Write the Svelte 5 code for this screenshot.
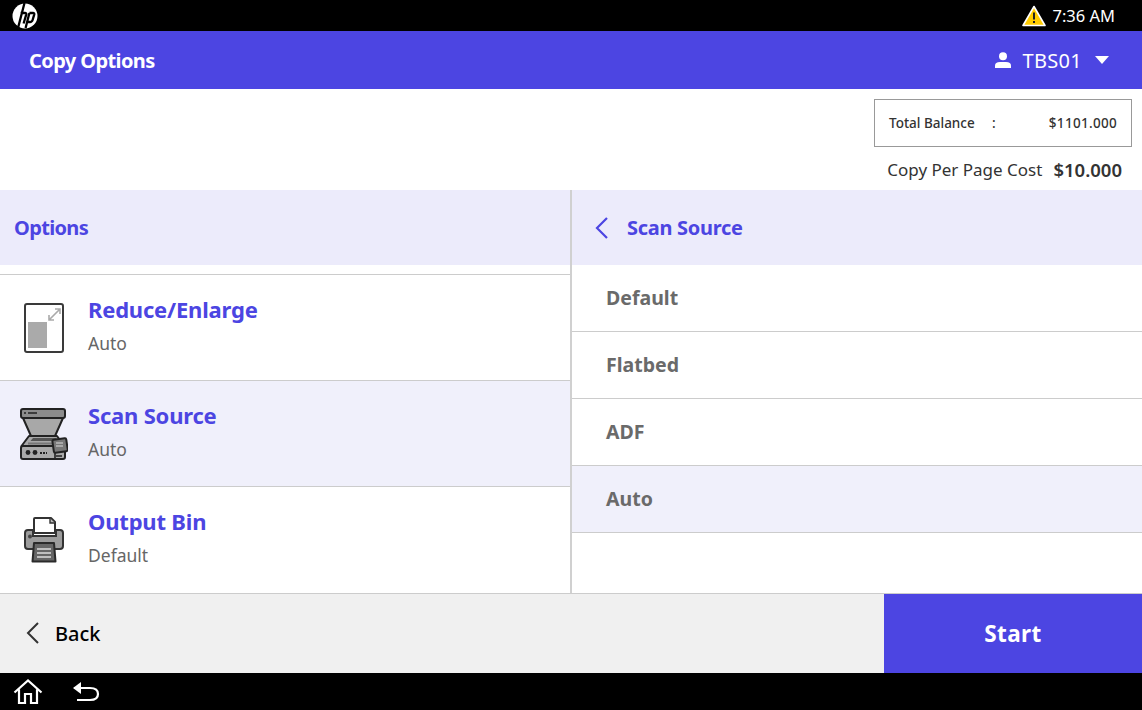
<script>
  const options = [
    { name: 'Reduce/Enlarge', value: 'Auto', icon: 'reduce' },
    { name: 'Scan Source', value: 'Auto', icon: 'scan', selected: true },
    { name: 'Output Bin', value: 'Default', icon: 'bin' }
  ];
  const sources = [
    { name: 'Default' },
    { name: 'Flatbed' },
    { name: 'ADF' },
    { name: 'Auto', selected: true }
  ];
</script>

<div class="screen">
  <div class="status">
    <div class="logo">
      <svg width="26" height="26" viewBox="0 0 26 26">
        <circle cx="13" cy="13" r="12.5" fill="#fff" />
        <path d="M12.5 0 L6 25 M8.6 10 H13 Q14.6 10 14.2 11.6 L11.6 20.5 M17.4 10 H21 Q22.6 10 22.2 11.6 L20.6 17 Q20 19 18 19 H15.6 M17.4 10 L13.6 25" fill="none" stroke="#000" stroke-width="2.3" />
      </svg>
    </div>
    <div class="clock">
      <svg width="24" height="22" viewBox="0 0 24 22">
        <path d="M12 1.5 L23 20.5 H1 Z" fill="#ffcc00" stroke="#fff" stroke-width="1.6" stroke-linejoin="round" />
        <path d="M12 7.5 V14.5 M12 16 V18" stroke="#222" stroke-width="2" />
      </svg>
      <span>7:36 AM</span>
    </div>
  </div>

  <header class="title">
    <h1>Copy Options</h1>
    <div class="user">
      <svg width="18" height="16" viewBox="0 0 18 16">
        <circle cx="9" cy="4.2" r="4" fill="#fff" />
        <path d="M1 16 V13.5 Q1 10 6 10 H12 Q17 10 17 13.5 V16 Z" fill="#fff" />
      </svg>
      <span>TBS01</span>
      <svg class="caret" width="16" height="8" viewBox="0 0 16 8"><path d="M1 0 H15 L8 8 Z" fill="#fff" /></svg>
    </div>
  </header>

  <section class="balance">
    <div class="balance-box">
      <span class="label">Total Balance</span>
      <span class="colon">:</span>
      <span class="amount">$1101.000</span>
    </div>
    <div class="cost">
      <span>Copy Per Page Cost</span>
      <strong>$10.000</strong>
    </div>
  </section>

  <main class="panes">
    <div class="pane left">
      <div class="pane-head">Options</div>
      <ul class="options">
        {#each options as opt}
          <li class="option" class:selected={opt.selected}>
            <div class="option-icon">
              {#if opt.icon === 'reduce'}
                <svg width="40" height="50" viewBox="0 0 40 50">
                  <rect x="1" y="1" width="38" height="48" rx="2" fill="#fff" stroke="#3a3a3a" stroke-width="2" />
                  <rect x="4" y="19" width="19" height="26" fill="#aaa" />
                  <path d="M25 17 L36 6 M31 6 H36 V11 M25 12 V17 H30" fill="none" stroke="#aaa" stroke-width="1.6" />
                </svg>
              {:else if opt.icon === 'scan'}
                <svg width="48" height="52" viewBox="0 0 48 52">
                  <path d="M3 1 H43 Q45 1 45 3 V8 Q45 10 43 10 H3 Q1 10 1 8 V3 Q1 1 3 1 Z" fill="#8c8c8c" stroke="#222" stroke-width="2" />
                  <path d="M4 5 H6 M8 5 H17" stroke="#222" stroke-width="1.6" />
                  <path d="M3 10 L11 28 H35 L43 10 Z" fill="#a8a8a8" stroke="#222" stroke-width="2" stroke-linejoin="round" />
                  <path d="M9 28 L1.5 38 H44.5 L37 28 Z" fill="#a8a8a8" stroke="#222" stroke-width="2" stroke-linejoin="round" />
                  <path d="M10.5 33 L13 30 H36 L38 33 Z" fill="#555" />
                  <path d="M8 35.5 H38" stroke="#777" stroke-width="2" />
                  <rect x="1" y="38" width="44" height="13" rx="2" fill="#aaa" stroke="#222" stroke-width="2" />
                  <circle cx="8" cy="44.5" r="2.4" fill="#222" />
                  <circle cx="15" cy="44.5" r="2.4" fill="#222" />
                  <path d="M20 45 H27" stroke="#222" stroke-width="2" stroke-dasharray="2 1" />
                  <rect x="33" y="31" width="14" height="13" rx="1.5" transform="rotate(-8 40 37)" fill="#777" stroke="#222" stroke-width="2" />
                  <path d="M36 35 H43 M36 38 H43" stroke="#bbb" stroke-width="1.3" />
                  <path d="M36 48 H42 M35 45 V50" stroke="#222" stroke-width="1.6" />
                </svg>
              {:else}
                <svg width="40" height="46" viewBox="0 0 40 46">
                  <path d="M10 14 V2 Q10 1 11 1 H27 L31 5 V16 H10 Z" fill="#fff" stroke="#333" stroke-width="2" stroke-linejoin="round" />
                  <path d="M26 1.5 V6 H31" fill="#bbb" stroke="#333" stroke-width="1.4" />
                  <path d="M4 13 H9 V19 H32 V13 H36 Q39 13 39 16 V29 Q39 32 36 32 H4 Q1 32 1 29 V16 Q1 13 4 13 Z" fill="#9c9c9c" stroke="#333" stroke-width="2" />
                  <circle cx="6" cy="19.5" r="2" fill="#444" />
                  <path d="M10 26 H30 L31.5 44.5 H8.5 Z" fill="#666" stroke="#2a2a2a" stroke-width="2" stroke-linejoin="round" />
                  <path d="M13 32 H27 M13 36 H27 M13 40 H27" stroke="#ddd" stroke-width="1.5" />
                </svg>
              {/if}
            </div>
            <div class="option-text">
              <div class="option-name">{opt.name}</div>
              <div class="option-value">{opt.value}</div>
            </div>
          </li>
        {/each}
      </ul>
    </div>
    <div class="pane right">
      <div class="pane-head">
        <svg class="chev" width="14" height="22" viewBox="0 0 14 22"><path d="M12 1 L2 11 L12 21" fill="none" stroke="#4c45e2" stroke-width="2.2" /></svg>
        <span>Scan Source</span>
      </div>
      <ul class="sources">
        {#each sources as src}
          <li class="source" class:selected={src.selected}>{src.name}</li>
        {/each}
      </ul>
    </div>
  </main>

  <footer class="actions">
    <div class="back">
      <svg width="14" height="22" viewBox="0 0 14 22"><path d="M12 1 L2 11 L12 21" fill="none" stroke="#333" stroke-width="2" /></svg>
      <span>Back</span>
    </div>
    <div class="start">Start</div>
  </footer>

  <nav class="bottom">
    <svg width="30" height="26" viewBox="0 0 30 26">
      <path d="M1.5 13.5 L15 1.5 L28.5 13.5 M6 10.5 V24 H12 V15 H18 V24 H24 V10.5" fill="none" stroke="#fff" stroke-width="2.2" />
    </svg>
    <svg width="28" height="20" viewBox="0 0 28 20">
      <path d="M2 6 H18 Q26 6 26 12 Q26 18 18 18 H5" fill="none" stroke="#fff" stroke-width="2.2" />
      <path d="M9 0 V12 L1 6 Z" fill="#fff" />
    </svg>
  </nav>
</div>

<style>
  :global(body) {
    margin: 0;
    background: #fff;
  }
  .screen {
    width: 1142px;
    height: 710px;
    display: flex;
    flex-direction: column;
    overflow: hidden;
    font-family: "Noto Sans", "Open Sans", sans-serif;
    color: #333;
  }
  ul {
    list-style: none;
    margin: 0;
    padding: 0;
  }

  .status {
    height: 31px;
    background: #000;
    display: flex;
    justify-content: space-between;
    align-items: center;
    color: #fff;
    padding: 0 27px 0 12px;
  }
  .logo {
    display: flex;
  }
  .clock {
    display: flex;
    align-items: center;
    gap: 6px;
    font-size: 16.5px;
  }

  .title {
    height: 58px;
    background: #4c45e2;
    color: #fff;
    display: flex;
    justify-content: space-between;
    align-items: center;
    padding: 0 32px 0 29px;
  }
  h1 {
    margin: 0;
    font-size: 20px;
    font-weight: 700;
    letter-spacing: -0.6px;
  }
  .user {
    display: flex;
    align-items: center;
    font-size: 20px;
    letter-spacing: 0.3px;
  }
  .user span {
    margin: 0 12px 0 11px;
  }

  .balance {
    height: 101px;
    display: flex;
    flex-direction: column;
    align-items: flex-end;
    padding: 10px 10px 0 0;
    box-sizing: border-box;
  }
  .balance-box {
    width: 258px;
    height: 48px;
    box-sizing: border-box;
    border: 1px solid #999;
    display: flex;
    align-items: center;
    padding: 0 14px;
    font-size: 13.5px;
    font-weight: 500;
  }
  .label {
    width: 103px;
  }
  .amount {
    margin-left: auto;
    letter-spacing: 0.3px;
  }
  .cost {
    display: flex;
    align-items: center;
    gap: 11px;
    margin-top: 11px;
    padding-right: 10px;
    font-size: 17px;
    height: 23px;
  }
  .cost strong {
    font-size: 18.5px;
    font-weight: 600;
  }

  .panes {
    height: 403px;
    display: flex;
  }
  .pane {
    display: flex;
    flex-direction: column;
  }
  .left {
    width: 570px;
    border-right: 2px solid #d0d0d0;
  }
  .right {
    flex: 1;
  }
  .pane-head {
    height: 75px;
    flex: none;
    background: #ecebfb;
    display: flex;
    align-items: center;
    padding-left: 14px;
    color: #4c45e2;
    font-size: 20px;
    font-weight: 700;
    letter-spacing: -0.65px;
  }
  .right .pane-head {
    padding-left: 23px;
    letter-spacing: -0.3px;
  }
  .chev {
    margin-right: 18px;
  }

  .options {
    margin-top: 9px;
    border-top: 1px solid #ccc;
  }
  .option {
    height: 105px;
    border-bottom: 1px solid #ccc;
    display: flex;
    align-items: center;
  }
  .option:last-child {
    border-bottom: none;
  }
  .option.selected {
    background: #f0f0fb;
  }
  .option-icon {
    width: 88px;
    flex: none;
    display: flex;
    justify-content: center;
  }
  .option-text {
    padding-bottom: 7px;
  }
  .option-name {
    color: #4c45e2;
    font-size: 22px;
    font-weight: 700;
    letter-spacing: -0.2px;
    line-height: 30px;
  }
  .option-value {
    margin-top: 7px;
    color: #666;
    font-size: 17.5px;
    line-height: 24px;
  }

  .source {
    height: 64px;
    border-bottom: 1px solid #ccc;
    display: flex;
    align-items: center;
    padding: 0 0 2px 34px;
    color: #6a6a6a;
    font-size: 19.5px;
    font-weight: 700;
  }
  .source.selected {
    background: #f0f0fb;
  }

  .actions {
    height: 80px;
    background: #f0f0f0;
    border-top: 1px solid #ccc;
    box-sizing: border-box;
    display: flex;
    justify-content: space-between;
  }
  .back {
    display: flex;
    align-items: center;
    padding: 0 0 1px 26px;
    gap: 15px;
    color: #000;
    font-size: 20px;
    font-weight: 500;
  }
  .start {
    width: 258px;
    background: #4c45e2;
    color: #fff;
    font-size: 22.5px;
    font-weight: 700;
    display: flex;
    align-items: center;
    justify-content: center;
    letter-spacing: 0.4px;
    padding-bottom: 1px;
  }

  .bottom {
    height: 37px;
    background: #000;
    display: flex;
    align-items: center;
    gap: 29px;
    padding-left: 13px;
  }
</style>
